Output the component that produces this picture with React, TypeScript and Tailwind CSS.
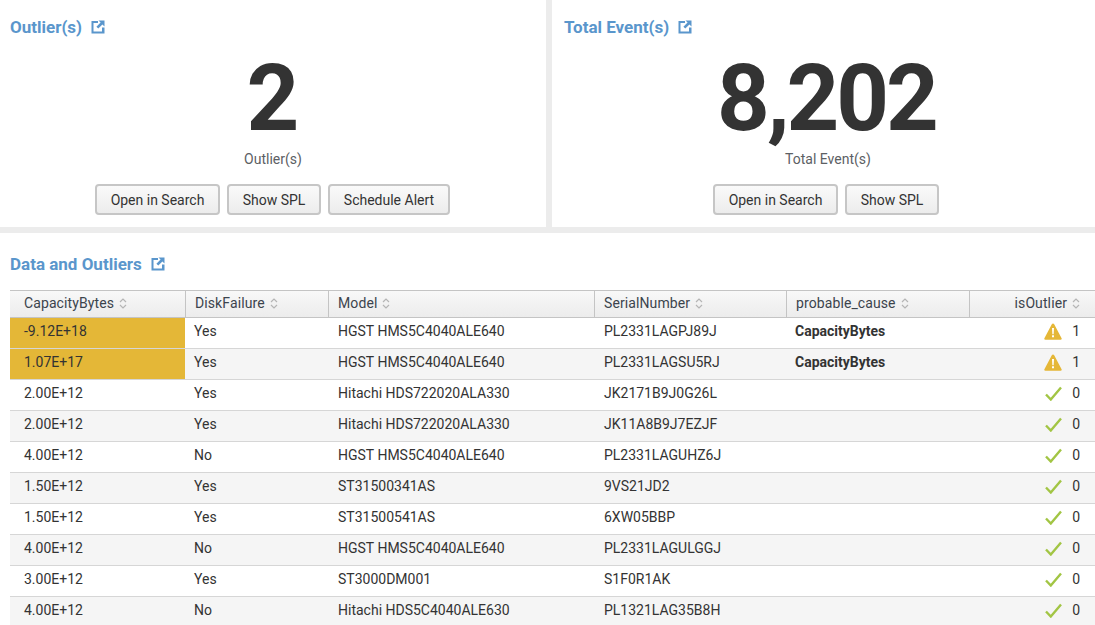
import React from 'react';

const FONT = 'font-["Roboto",sans-serif]';

type Row = {
  capacity: string;
  failure: string;
  model: string;
  serial: string;
  cause?: string;
  outlier: number;
};

const ROWS: Row[] = [
  { capacity: '-9.12E+18', failure: 'Yes', model: 'HGST HMS5C4040ALE640', serial: 'PL2331LAGPJ89J', cause: 'CapacityBytes', outlier: 1 },
  { capacity: '1.07E+17', failure: 'Yes', model: 'HGST HMS5C4040ALE640', serial: 'PL2331LAGSU5RJ', cause: 'CapacityBytes', outlier: 1 },
  { capacity: '2.00E+12', failure: 'Yes', model: 'Hitachi HDS722020ALA330', serial: 'JK2171B9J0G26L', outlier: 0 },
  { capacity: '2.00E+12', failure: 'Yes', model: 'Hitachi HDS722020ALA330', serial: 'JK11A8B9J7EZJF', outlier: 0 },
  { capacity: '4.00E+12', failure: 'No', model: 'HGST HMS5C4040ALE640', serial: 'PL2331LAGUHZ6J', outlier: 0 },
  { capacity: '1.50E+12', failure: 'Yes', model: 'ST31500341AS', serial: '9VS21JD2', outlier: 0 },
  { capacity: '1.50E+12', failure: 'Yes', model: 'ST31500541AS', serial: '6XW05BBP', outlier: 0 },
  { capacity: '4.00E+12', failure: 'No', model: 'HGST HMS5C4040ALE640', serial: 'PL2331LAGULGGJ', outlier: 0 },
  { capacity: '3.00E+12', failure: 'Yes', model: 'ST3000DM001', serial: 'S1F0R1AK', outlier: 0 },
  { capacity: '4.00E+12', failure: 'No', model: 'Hitachi HDS5C4040ALE630', serial: 'PL1321LAG35B8H', outlier: 0 },
];

const COLUMNS = [
  { label: 'CapacityBytes', className: 'w-[175px] pl-[14px]' },
  { label: 'DiskFailure', className: 'w-[143px] pl-[9px] border-l border-[#c4c4c4]' },
  { label: 'Model', className: 'w-[266px] pl-[9px] border-l border-[#c4c4c4]' },
  { label: 'SerialNumber', className: 'w-[192px] pl-[9px] border-l border-[#c4c4c4]' },
  { label: 'probable_cause', className: 'w-[183px] pl-[9px] border-l border-[#c4c4c4]' },
  { label: 'isOutlier', className: 'flex-1 justify-end pr-[15px] border-l border-[#c4c4c4]' },
];

const BUTTONS = [
  { label: 'Open in Search', width: 'w-[125px]' },
  { label: 'Show SPL', width: 'w-[94px]' },
  { label: 'Schedule Alert', width: 'w-[122px]' },
];

const ExternalIcon = () => (
  <svg width="14" height="14" viewBox="0 0 14 14" aria-hidden="true">
    <path d="M0.5 1h6.5v2H2.5v8.5H11V7.5h2.5V13.5H0.5z" fill="#5a96cc" />
    <path d="M7.5 0.5H13.5V6.5L11.4 4.4 7.3 8.6 5.4 6.7 9.6 2.6z" fill="#5a96cc" />
  </svg>
);

const SortIcon = () => (
  <svg width="8" height="11" viewBox="0 0 8 11" className="ml-[5px] mt-[1px]" aria-hidden="true">
    <path d="M1 4l3-3 3 3M1 7l3 3 3-3" fill="none" stroke="#b5b5b5" strokeWidth="1.2" />
  </svg>
);

const WarnIcon = () => (
  <svg width="18" height="17" viewBox="0 0 18 17" aria-hidden="true">
    <path d="M9 0.5c.5 0 .9.3 1.2.8l7.4 13.9c.4.7 0 1.5-.9 1.5H1.3c-.9 0-1.3-.8-.9-1.5L7.8 1.3C8.1.8 8.5.5 9 .5z" fill="#e5b737" />
    <path d="M8 5h2l-.35 6.2h-1.3zM8 12.2h2v2H8z" fill="#fff" />
  </svg>
);

const CheckIcon = () => (
  <svg width="17" height="15" viewBox="0 0 17 15" aria-hidden="true">
    <path d="M1 8.5l4.8 5L16 1.5" fill="none" stroke="#a2c544" strokeWidth="2.4" />
  </svg>
);

const PanelTitle = ({ title }: { title: string }) => (
  <div className="flex items-center gap-[9px] h-[20px] text-[17px] font-bold text-[#5a96cc] leading-[20px]">
    <span>{title}</span>
    <ExternalIcon />
  </div>
);

type SingleValueProps = {
  title: string;
  value: string;
  buttonCount: number;
  titleClass: string;
  bodyClass?: string;
  actionsClass?: string;
};

const SingleValue = ({ title, value, buttonCount, titleClass, bodyClass = '', actionsClass = '' }: SingleValueProps) => (
  <section className="flex-1 bg-white pt-[17px] flex flex-col">
    <div className={titleClass}>
      <PanelTitle title={title} />
    </div>
    <div className={`flex flex-col items-center ${bodyClass}`}>
      <div className="mt-[21px] mr-[3px] h-[79px] text-[92px] leading-[82px] font-bold tracking-[-3px] text-[#333]">{value}</div>
      <div className="mt-[12px] h-[20px] text-[14px] leading-[20px] text-[#5c6064]">{title}</div>
      <div className={`mt-[15px] flex gap-[7px] ${actionsClass}`}>
        {BUTTONS.slice(0, buttonCount).map((btn) => (
          <button
            key={btn.label}
            className={`h-[31px] rounded-[4px] border-2 border-[#c6c6c6] bg-gradient-to-b from-[#fafafa] to-[#ececec] text-[14px] leading-none text-[#333] ${btn.width}`}
          >
            {btn.label}
          </button>
        ))}
      </div>
    </div>
  </section>
);

const Cell = ({ className = '', children }: { className?: string; children?: React.ReactNode }) => (
  <div className={`flex items-center h-full pb-[4px] ${className}`}>{children}</div>
);

export default function App() {
  return (
    <div className={`${FONT} h-[625px] w-[1095px] overflow-hidden bg-[#ececec] text-[#333]`}>
      <div className="flex gap-[6px] h-[227px]">
        <div className="w-[546px] flex">
          <SingleValue title="Outlier(s)" value="2" buttonCount={3} titleClass="pl-[10px]" actionsClass="mr-[1px]" />
        </div>
        <div className="flex-1 flex">
          <SingleValue
            title="Total Event(s)"
            value="8,202"
            buttonCount={2}
            titleClass="pl-[12px]"
            bodyClass="pl-[9px]"
            actionsClass="mr-[4px]"
          />
        </div>
      </div>

      <section className="mt-[6px] h-[392px] bg-white pt-[21px] pl-[10px]">
        <PanelTitle title="Data and Outliers" />
        <div className="mt-[16px] text-[14px]">
          <div className="flex h-[28px] border-y border-[#c4c4c4] bg-gradient-to-b from-[#f8f8f8] to-[#ececec]">
            {COLUMNS.map((col) => (
              <div key={col.label} className={`flex items-center pb-[2px] ${col.className}`}>
                <span className="text-[#3c444d] tracking-[0.1px]">{col.label}</span>
                <SortIcon />
              </div>
            ))}
          </div>
          {ROWS.map((row, i) => (
            <div
              key={row.serial}
              className={`flex h-[31px] border-b border-[#d6d6d6] ${i % 2 === 1 ? 'bg-[#f5f5f5]' : 'bg-white'}`}
            >
              <Cell className={`w-[175px] pl-[14px] ${row.cause ? 'bg-[#e4b737]' : ''}`}>{row.capacity}</Cell>
              <Cell className="w-[143px] pl-[9px]">{row.failure}</Cell>
              <Cell className="w-[266px] pl-[10px]">{row.model}</Cell>
              <Cell className="w-[192px] pl-[10px]">{row.serial}</Cell>
              <Cell className="w-[183px] pl-[9px] font-bold">{row.cause}</Cell>
              <Cell className="flex-1 justify-end gap-[10px] pr-[15px]">
                {row.outlier ? <WarnIcon /> : <CheckIcon />}
                <span>{row.outlier}</span>
              </Cell>
            </div>
          ))}
        </div>
      </section>
    </div>
  );
}
